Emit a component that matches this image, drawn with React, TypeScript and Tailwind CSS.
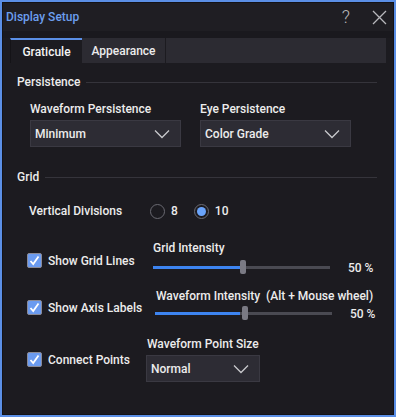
import React from 'react';

const font = { fontFamily: 'Roboto, "Liberation Sans", sans-serif' };
const txt = 'text-[12px] leading-[14px] font-medium text-[#ececec]';

function Chevron() {
  return (
    <svg width="16" height="10" viewBox="0 0 16 10" className="text-[#c8c8cc]">
      <path d="M1 1.5 L8 8.5 L15 1.5" fill="none" stroke="currentColor" strokeWidth="1.3" />
    </svg>
  );
}

function Select({ value, width }: { value: string; width: string }) {
  return (
    <div className={`${width} h-[27px] flex items-center justify-between pl-[4px] pr-[10px] bg-[#2d2c34] border border-[#3a3942]`}>
      <span className={txt}>{value}</span>
      <Chevron />
    </div>
  );
}

function Check({ label, top }: { label: string; top: string }) {
  return (
    <div className={`flex items-center gap-[6px] ${top}`}>
      <div className="w-[15px] h-[15px] rounded-[2px] bg-[#6b9bf0] border border-[#8a8a96] flex items-center justify-center">
        <svg width="11" height="11" viewBox="0 0 11 11">
          <path d="M1.5 6 L4.2 9 L9.5 1.5" fill="none" stroke="#ffffff" strokeWidth="1.8" />
        </svg>
      </div>
      <span className={txt}>{label}</span>
    </div>
  );
}

function Slider({ pct }: { pct: number }) {
  return (
    <div className="flex items-center h-[14px]">
      <div className="relative w-[177px] h-[14px] flex items-center">
        <div className="w-full h-[3px] bg-[#4a4a52]" />
        <div className="absolute left-0 h-[3px] bg-[#3d84f0]" style={{ width: `${pct}%` }} />
        <div className="absolute left-[87px] w-[6px] h-[14px] rounded-[2px] bg-[#7a7a84]" />
      </div>
      <span className={`${txt} ml-[18px] mt-[2px]`}>50 %</span>
    </div>
  );
}

function Radio({ on, label }: { on: boolean; label: string }) {
  return (
    <div className="flex items-center gap-[6px]">
      <div className="w-[15px] h-[15px] rounded-full border border-[#6a6a72] flex items-center justify-center">
        {on && <div className="w-[9px] h-[9px] rounded-full bg-[#6aa4fb]" />}
      </div>
      <span className={txt}>{label}</span>
    </div>
  );
}

export default function App() {
  return (
    <div className="w-[396px] h-[417px] border-2 border-[#5b8fe6] bg-[#1c1b20] flex flex-col" style={font}>
      <div className="flex-1 border border-[#131216] flex flex-col">
        <div className="h-[28px] flex items-center justify-between pl-[3px] pr-[6px] bg-[#1f1e23]">
          <span className="text-[12px] leading-[14px] text-[#6c9eee] font-medium">Display Setup</span>
          <div className="flex items-center gap-[22px] text-[#b8b8bc]">
            <span className="text-[18px] leading-[18px] font-light">?</span>
            <svg width="15" height="15" viewBox="0 0 15 15">
              <path d="M1 1 L14 14 M14 1 L1 14" stroke="currentColor" strokeWidth="1.3" />
            </svg>
          </div>
        </div>
        <div className="h-[7px] bg-[#1a191e]" />
        <div className="ml-[7px] mr-[7px] flex h-[25px] bg-[#2c2b32]">
          <div className={`w-[72px] border-t-2 border-[#5b8fe6] border-l border-l-[#141317] bg-[#1c1b20] flex items-center justify-center ${txt} text-[#f4f4f4]`}>Graticule</div>
          <div className={`w-[84px] border-r border-[#1c1b20] flex items-center justify-center ${txt} text-[#d8d8dc]`}>Appearance</div>
        </div>

        <div className="pl-[14px] pr-[14px] pt-[12px]">
          <div className="flex items-center gap-[6px] h-[14px]">
            <span className={txt}>Persistence</span>
            <div className="flex-1 h-px bg-[#35343b] mr-[2px]" />
          </div>
          <div className="flex gap-[19px] pl-[13px] pt-[13px]">
            <div className="flex flex-col gap-[4px]">
              <span className={txt}>Waveform Persistence</span>
              <Select value="Minimum" width="w-[151px]" />
            </div>
            <div className="flex flex-col gap-[4px]">
              <span className={txt}>Eye Persistence</span>
              <Select value="Color Grade" width="w-[151px]" />
            </div>
          </div>

          <div className="flex items-center gap-[6px] h-[14px] mt-[23px]">
            <span className={txt}>Grid</span>
            <div className="flex-1 h-px bg-[#35343b] mr-[2px]" />
          </div>
          <div className="flex items-center h-[16px] pl-[12px] mt-[19px]">
            <span className={`w-[121px] ${txt}`}>Vertical Divisions</span>
            <div className="flex items-center gap-[16px]">
              <Radio on={false} label="8" />
              <Radio on label="10" />
            </div>
          </div>

          <div className="flex items-start pl-[10px] mt-[22px]">
            <div className="w-[126px]">
              <Check label="Show Grid Lines" top="mt-[12px]" />
            </div>
            <div className="flex flex-col gap-[5px]">
              <span className={txt}>Grid Intensity</span>
              <Slider pct={49} />
            </div>
          </div>

          <div className="flex items-start pl-[10px] mt-[15px]">
            <div className="w-[126px]">
              <Check label="Show Axis Labels" top="mt-[11px]" />
            </div>
            <div className="flex flex-col gap-[3px] -ml-[1px]">
              <span className={`${txt} whitespace-pre pl-[4px]`}>Waveform Intensity  (Alt + Mouse wheel)</span>
              <div className="pl-[3px]">
                <Slider pct={48} />
              </div>
            </div>
          </div>

          <div className="flex items-start pl-[10px] mt-[17px]">
            <div className="w-[119px]">
              <Check label="Connect Points" top="mt-[15px]" />
            </div>
            <div className="flex flex-col gap-[4px]">
              <span className={`${txt} pl-[1px]`}>Waveform Point Size</span>
              <Select value="Normal" width="w-[114px]" />
            </div>
          </div>
        </div>
      </div>
    </div>
  );
}
